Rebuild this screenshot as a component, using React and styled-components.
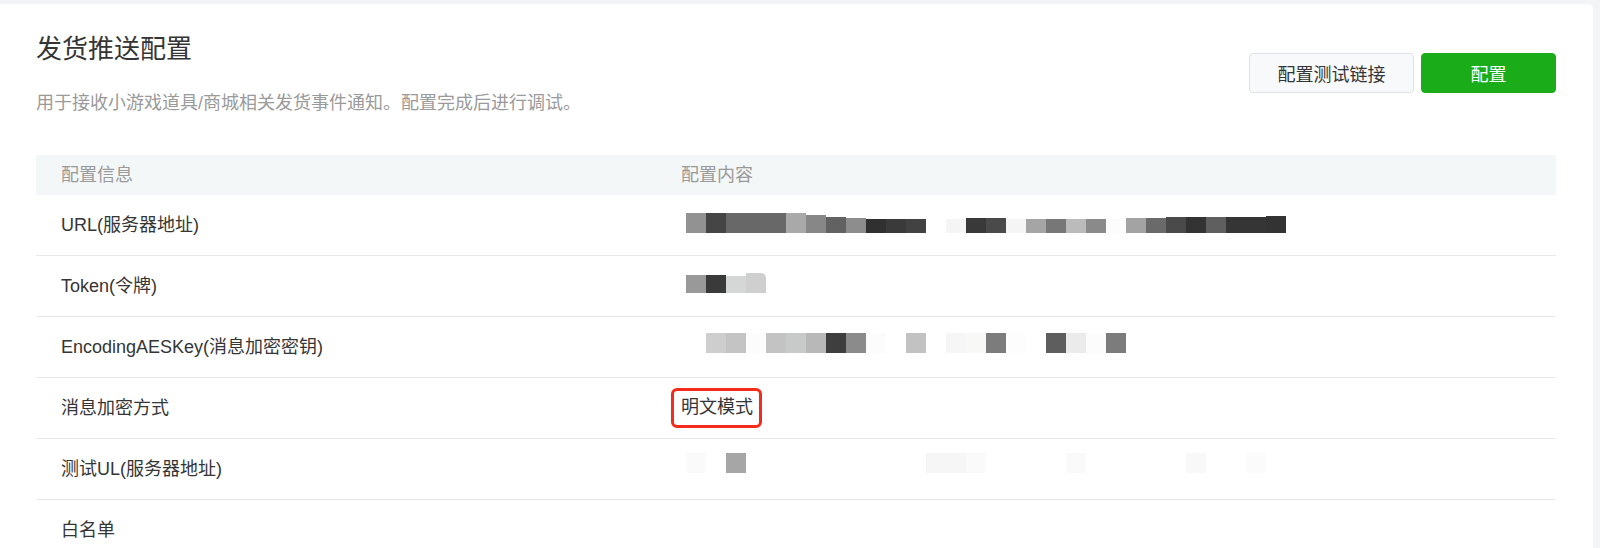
import styled, { createGlobalStyle } from 'styled-components';

const GlobalStyle = createGlobalStyle`
  html, body {
    margin: 0;
    padding: 0;
    background: #f2f4f5;
  }
  body {
    font-family: "Liberation Sans", "Noto Sans CJK SC", sans-serif;
    color: #353535;
  }
`;

const rows = [
  {
    label: 'URL(服务器地址)',
    lift: 2,
    start: 5,
    cells: [
      ['#929292', 20], ['#454545', 20], ['#686868', 20], ['#686868', 20], ['#686868', 20],
      ['#a9a9a9', 20], ['#878787', 18], ['#626262', 16], ['#8d8d8d', 15], ['#303030', 14],
      ['#3a3a3a', 14], ['#424242', 14], [null], ['#f5f5f5', 14], ['#393939', 15],
      ['#4a4a4a', 15], ['#f5f5f5', 14], ['#a5a5a5', 14], ['#777777', 14], ['#bbbbbb', 14],
      ['#8a8a8a', 14], ['#fcfcfc', 14], ['#a3a3a3', 15], ['#6a6a6a', 15], ['#4a4a4a', 16],
      ['#333333', 16], ['#5f5f5f', 16], ['#353535', 16], ['#353535', 16], ['#333333', 17],
    ],
  },
  {
    label: 'Token(令牌)',
    lift: 3,
    start: 5,
    cells: [['#999999', 18], ['#3a3a3a', 18], ['#d5d7d6', 17], ['#cfcfcf', 20, true]],
  },
  {
    label: 'EncodingAESKey(消息加密密钥)',
    lift: 4,
    start: 25,
    cells: [
      ['#cecece'], ['#c4c4c4'], ['#fcfcfc'], ['#c3c3c3'], ['#c8cac9'], ['#b8b8b8'],
      ['#3e3e3e'], ['#8b8b8b'], ['#fcfcfc'], [null], ['#c2c2c2'], [null], ['#f6f6f6'],
      ['#f8f8f6'], ['#7c7c7c'], ['#fdfdfd'], [null], ['#5e5e5e'], ['#ebebeb'], ['#fcfcfc'],
      ['#7c7c7c'],
    ],
  },
  { label: '消息加密方式', mode: '明文模式' },
  {
    label: '测试UL(服务器地址)',
    lift: 6,
    start: 5,
    cells: [
      ['#fafafa'], [null], ['#a6a6a6'], [null], [null], [null], [null], [null], [null],
      [null], [null], [null], ['#f6f6f6'], ['#f6f6f6'], ['#fafafa'], [null], [null], [null],
      [null], ['#fafafa'], [null], [null], [null], [null], [null], ['#f8f8f8'], [null], [null],
      ['#fbfbfb'],
    ],
  },
  { label: '白名单' },
];

const Mosaic = ({ cells, start, lift }) => (
  <MosaicRow $start={start} $lift={lift}>
    {cells.map(([color, h, round], i) => (
      <Pixel key={i} $c={color} $h={h || 20} $round={round} />
    ))}
  </MosaicRow>
);

const App = () => {
  return (
    <>
      <GlobalStyle />
      <Card>
        <Head>
          <div>
            <Title>发货推送配置</Title>
            <Desc>用于接收小游戏道具/商城相关发货事件通知。配置完成后进行调试。</Desc>
          </div>
          <Actions>
            <Button>配置测试链接</Button>
            <Button $primary>配置</Button>
          </Actions>
        </Head>

        <Table>
          <HeadRow>
            <Cell>配置信息</Cell>
            <Cell>配置内容</Cell>
          </HeadRow>
          {rows.map((row) => (
            <Row key={row.label}>
              <Cell>{row.label}</Cell>
              <Cell>
                {row.cells && <Mosaic cells={row.cells} start={row.start} lift={row.lift} />}
                {row.mode && <Marked>{row.mode}</Marked>}
              </Cell>
            </Row>
          ))}
        </Table>
      </Card>
    </>
  );
};

export default App;

const Card = styled.div`
  margin: 4px 7px 0 0;
  height: 544px;
  overflow: hidden;
  box-sizing: border-box;
  padding: 28px 37px 0 36px;
  background: #fff;
  border-top-right-radius: 5px;
`;

const Head = styled.div`
  display: flex;
  justify-content: space-between;
  align-items: flex-start;
`;

const Title = styled.h2`
  margin: 0;
  font-size: 26px;
  line-height: 35px;
  font-weight: 400;
  color: #353535;
`;

const Desc = styled.p`
  margin: 24px 0 0;
  font-size: 18px;
  line-height: 25px;
  color: #9a9a9a;
`;

const Actions = styled.div`
  display: flex;
  gap: 7px;
  margin-top: 21px;
`;

const Button = styled.button`
  height: 40px;
  min-width: ${(p) => (p.$primary ? '135px' : '165px')};
  padding: 0 20px;
  box-sizing: border-box;
  border-radius: 4px;
  border: 1px solid ${(p) => (p.$primary ? '#1aad19' : '#dfe2e5')};
  background: ${(p) => (p.$primary ? '#1aad19' : '#f8f9fa')};
  color: ${(p) => (p.$primary ? '#fff' : '#353535')};
  font-family: inherit;
  font-size: 18px;
  cursor: pointer;
`;

const Table = styled.div`
  margin-top: 39px;
`;

const HeadRow = styled.div`
  display: grid;
  grid-template-columns: 620px 1fr;
  align-items: center;
  height: 40px;
  background: #f4f7f8;
  color: #9a9a9a;
  font-size: 18px;
`;

const Row = styled.div`
  display: grid;
  grid-template-columns: 620px 1fr;
  align-items: center;
  height: 60px;
  border-bottom: 1px solid #e8e8e8;
  font-size: 18px;
  color: #353535;
`;

const Cell = styled.div`
  display: flex;
  align-items: center;
  padding-left: 25px;
  line-height: 25px;
`;

const MosaicRow = styled.div`
  display: flex;
  align-items: flex-end;
  height: 20px;
  margin-left: ${(p) => p.$start}px;
  margin-bottom: ${(p) => p.$lift * 2}px;
`;

const Pixel = styled.span`
  flex: 0 0 20px;
  height: ${(p) => p.$h}px;
  background: ${(p) => p.$c || 'transparent'};
  border-top-right-radius: ${(p) => (p.$round ? '5px' : '0')};
`;

const Marked = styled.span`
  margin-left: -10px;
  padding: 4px 6px 5px 7px;
  border: 3px solid #f42c1d;
  border-radius: 6px;
  color: #353535;
`;
